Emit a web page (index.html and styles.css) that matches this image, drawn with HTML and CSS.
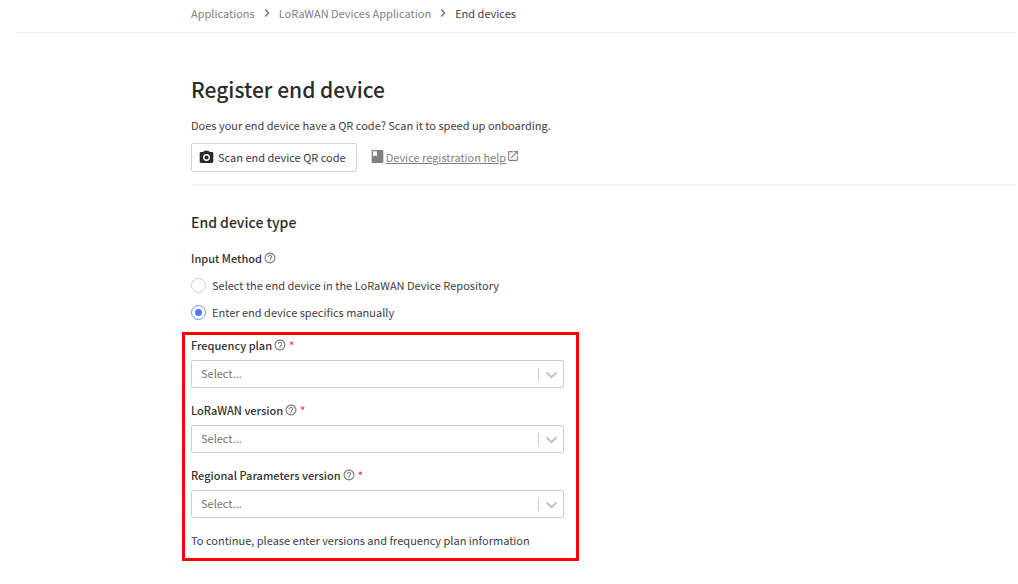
FILE: index.html
```html
<!DOCTYPE html>
<html lang="en">
<head>
<meta charset="utf-8">
<meta name="viewport" content="width=device-width, initial-scale=1">
<title>Register end device</title>
<link rel="stylesheet" href="styles.css">
</head>
<body>
<svg class="sprite" aria-hidden="true">
  <symbol id="help" viewBox="1 1 22 22"><path fill="currentColor" d="M11 18h2v-2h-2v2zm1-16C6.480 2 2 6.480 2 12s4.480 10 10 10 10-4.480 10-10S17.520 2 12 2zm0 18c-4.410 0-8-3.590-8-8s3.590-8 8-8 8 3.590 8 8-3.590 8-8 8zm0-14c-2.210 0-4 1.790-4 4h2c0-1.100.9-2 2-2s2 .9 2 2c0 2-3 1.750-3 5h2c0-2.250 3-2.500 3-5 0-2.210-1.790-4-4-4z"/></symbol>
  <symbol id="chevron" viewBox="0 0 24 24"><path fill="none" stroke="currentColor" stroke-width="3" d="M8.500 5 15 12l-6.500 7"/></symbol>
  <symbol id="expand" viewBox="3 3 14 14"><path fill="currentColor" d="M4.516 7.548c.436-.446 1.043-.481 1.576 0L10 11.295l3.908-3.747c.533-.481 1.141-.446 1.574 0 .436.445.408 1.197 0 1.615-.406.418-4.695 4.502-4.695 4.502a1.095 1.095 0 0 1-1.576 0S4.924 9.581 4.516 9.163s-.436-1.170 0-1.615z"/></symbol>
</svg>
<header class="topbar">
  <nav class="breadcrumbs" aria-label="Breadcrumb">
    <a href="#">Applications</a>
    <svg class="crumb-sep"><use href="#chevron"/></svg>
    <a href="#">LoRaWAN Devices Application</a>
    <svg class="crumb-sep"><use href="#chevron"/></svg>
    <span class="current">End devices</span>
  </nav>
</header>
<main class="content">
  <section class="intro">
    <h1>Register end device</h1>
    <p class="lead">Does your end device have a QR code? Scan it to speed up onboarding.</p>
    <div class="actions">
      <button type="button" class="scan">
        <svg class="camera" viewBox="1 1 22 22"><path fill="currentColor" fill-rule="evenodd" d="M9 2 7.170 4H4c-1.100 0-2 .9-2 2v12c0 1.100.9 2 2 2h16c1.100 0 2-.9 2-2V6c0-1.100-.9-2-2-2h-3.170L15 2H9zm3 15a5 5 0 1 1 0-10 5 5 0 0 1 0 10z"/><circle cx="12" cy="12" r="3" fill="currentColor"/></svg>
        Scan end device QR code
      </button>
      <a href="#" class="help-link">
        <svg class="book" viewBox="2 1 20 22"><path fill="currentColor" d="M19 2H5c-1.100 0-2 .9-2 2v16c0 1.100.9 2 2 2h14c1.100 0 2-.9 2-2V4c0-1.100-.9-2-2-2zM5 4h6v8l-3-2-3 2V4z"/></svg>
        <span class="help-text">Device registration help</span>
        <svg class="external" viewBox="1 1 22 22"><path fill="currentColor" d="M19 19H5V5h7V3H5a2 2 0 0 0-2 2v14a2 2 0 0 0 2 2h14c1.100 0 2-.9 2-2v-7h-2v7zM14 3v2h3.590l-9.830 9.830 1.410 1.410L19 6.410V10h2V3h-7z"/></svg>
      </a>
    </div>
  </section>
  <form class="device-form">
    <h2>End device type</h2>
    <fieldset class="method">
      <legend>Input Method<svg class="help-icon"><use href="#help"/></svg></legend>
      <label class="option"><input type="radio" name="method">Select the end device in the LoRaWAN Device Repository</label>
      <label class="option"><input type="radio" name="method" checked>Enter end device specifics manually</label>
    </fieldset>
    <div class="highlight">
      <div class="field">
        <label for="frequency">Frequency plan<svg class="help-icon"><use href="#help"/></svg><span class="required">*</span></label>
        <div class="select-box"><select id="frequency"><option>Select...</option></select><svg class="arrow"><use href="#expand"/></svg></div>
      </div>
      <div class="field">
        <label for="version">LoRaWAN version<svg class="help-icon"><use href="#help"/></svg><span class="required">*</span></label>
        <div class="select-box"><select id="version"><option>Select...</option></select><svg class="arrow"><use href="#expand"/></svg></div>
      </div>
      <div class="field">
        <label for="regional">Regional Parameters version<svg class="help-icon"><use href="#help"/></svg><span class="required">*</span></label>
        <div class="select-box"><select id="regional"><option>Select...</option></select><svg class="arrow"><use href="#expand"/></svg></div>
      </div>
      <p class="note">To continue, please enter versions and frequency plan information</p>
    </div>
  </form>
</main>
</body>
</html>
```
FILE: styles.css
```css
* { box-sizing: border-box; }
body {
  margin: 0;
  background: #fff;
  color: #404040;
  font: 11px/18px "Noto Sans CJK SC", "Noto Sans", sans-serif;
}
h1, h2, p, fieldset, legend { margin: 0; padding: 0; border: 0; }
button, select { font: inherit; }
.sprite { display: none; }
.topbar {
  margin: 0 2px 0 15px;
  padding: 4px 0 10px 176px;
  border-bottom: 1px solid #ededed;
}
.breadcrumbs { display: flex; align-items: center; gap: 6px; }
.breadcrumbs a { color: #808080; text-decoration: none; }
.crumb-sep { width: 12px; height: 12px; color: #777; }
.current { color: #404040; }
.content { padding: 40px 2px 20px 191px; }
.intro { padding-bottom: 12px; border-bottom: 2px solid #f5f5f5; }
h1 { font-size: 21px; line-height: 32px; font-weight: 500; color: #2c2c2c; }
.lead { margin-top: 11px; }
.actions { display: flex; align-items: center; gap: 14px; margin-top: 9px; }
.scan {
  display: flex;
  align-items: center;
  gap: 4px;
  height: 29px;
  padding: 0 10px 1px 7px;
  border: 1px solid #d2d2d2;
  border-radius: 2px;
  background: #fff;
  color: #3a3a3a;
}
.camera { width: 15px; height: 15px; color: #2a2a2a; }
.help-link { display: flex; align-items: center; padding-bottom: 2px; color: #808080; text-decoration: none; }
.help-text { text-decoration: underline; }
.book { width: 13px; height: 15px; margin-right: 2px; }
.external { width: 12px; height: 12px; margin: 0 0 2px 1px; }
.device-form { padding-top: 24px; }
h2 { font-size: 14px; line-height: 24px; font-weight: 500; color: #2c2c2c; }
.method { margin-top: 15px; }
legend, .field label { display: flex; align-items: center; font-weight: 500; color: #333; }
.help-icon { width: 12px; height: 12px; margin-left: 2px; color: #7a7a7a; }
.option { display: flex; align-items: center; gap: 6px; margin-top: 9px; }
.option input {
  appearance: none;
  display: grid;
  place-items: center;
  width: 15px;
  height: 15px;
  margin: 0;
  border: 1px solid #cfcfcf;
  border-radius: 50%;
}
.option input:checked { border-color: #6b93f5; }
.option input:checked::before {
  content: "";
  width: 7px;
  height: 7px;
  border-radius: 50%;
  background: #4a7cf3;
}
.highlight {
  display: grid;
  gap: 13px;
  max-width: 397px;
  margin: 11px 0 0 -9px;
  padding: 1px 12px 9px 6px;
  border: 3px solid #f00;
}
.required { margin-left: 3px; color: #f23c3c; }
.select-box { display: grid; align-items: center; margin-top: 6px; }
.select-box > * { grid-area: 1 / 1; }
.select-box select {
  appearance: none;
  width: 100%;
  height: 28px;
  padding: 0 36px 2px 9px;
  border: 1px solid #cdcdcd;
  border-radius: 2px;
  background: #fff;
  color: #747474;
}
.arrow {
  justify-self: end;
  width: 26px;
  height: 13px;
  padding: 0 6px;
  border-left: 1px solid #cdcdcd;
  color: #c4c4c4;
  pointer-events: none;
}
```
